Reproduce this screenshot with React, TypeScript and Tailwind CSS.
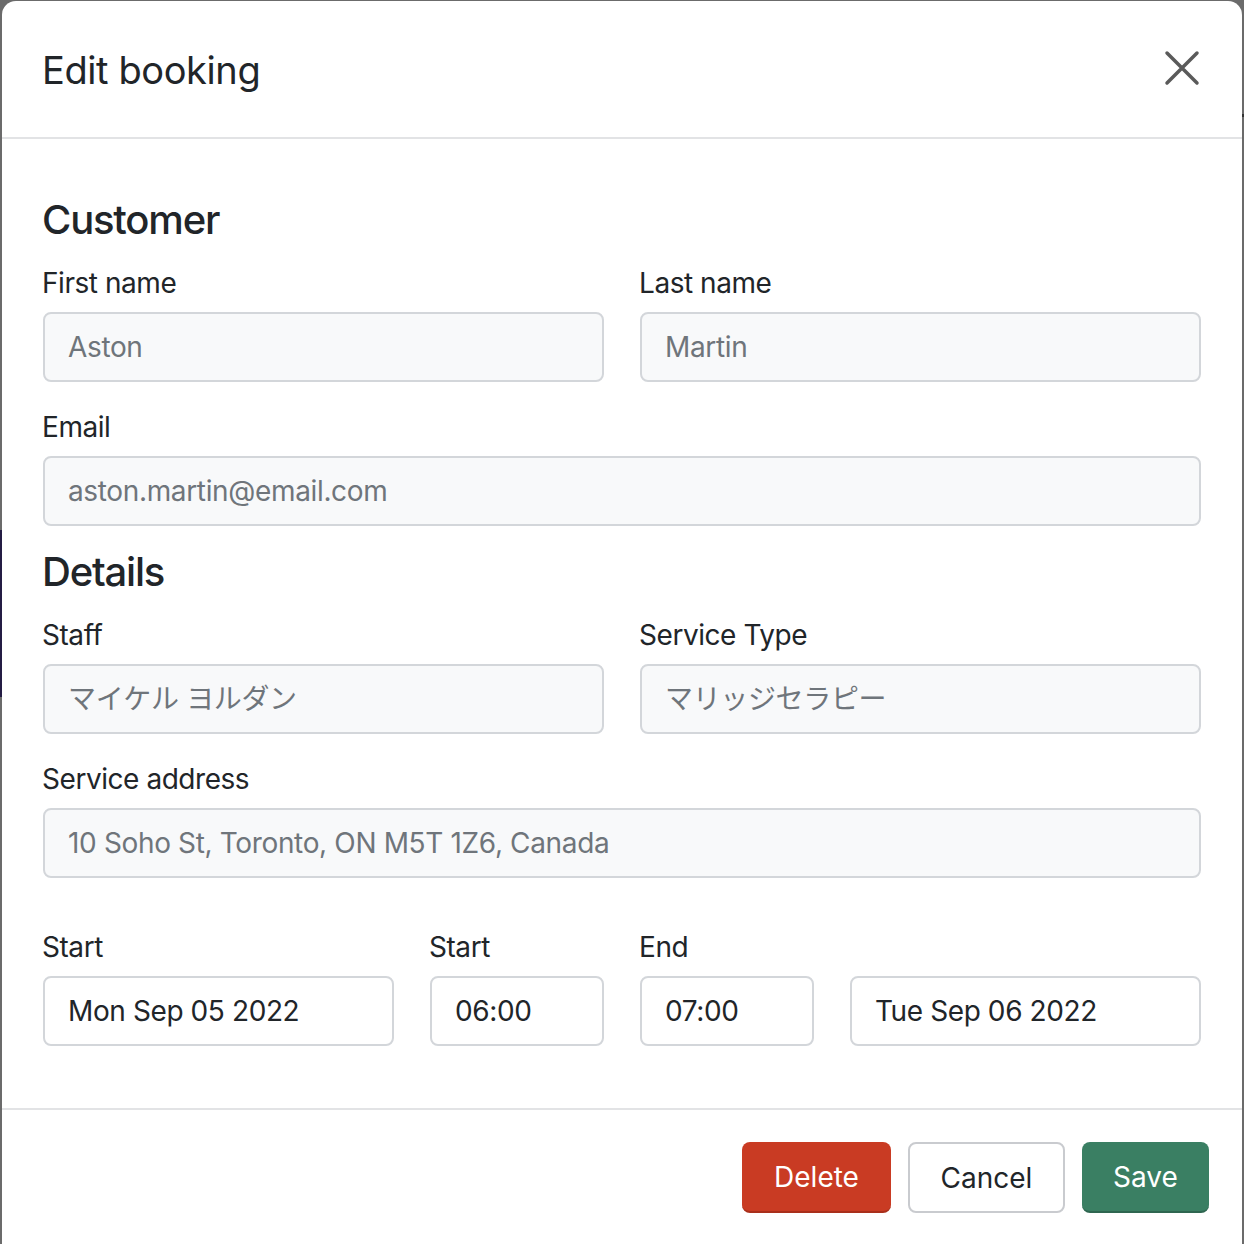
import React from "react";

const font = { fontFamily: 'Inter, "Noto Sans CJK JP", sans-serif' };

function Label({ children }: { children: React.ReactNode }) {
  return <div className="text-[28px] tracking-[-0.45px] leading-[36px] text-[#212529] mb-[11px] -ml-[1px]">{children}</div>;
}

function DisabledInput({ value }: { value: string }) {
  return (
    <div className="h-[70px] rounded-[8px] border-2 border-[#d3d6da] bg-[#f8f9fa] flex items-center pl-[23px] text-[28px] tracking-[-0.35px] text-[#6f757b] whitespace-nowrap overflow-hidden">
      {value}
    </div>
  );
}

function WhiteInput({ value }: { value: string }) {
  return (
    <div className="h-[70px] rounded-[8px] border-2 border-[#d3d6da] bg-white flex items-center pl-[23px] text-[28px] tracking-[-0.4px] text-[#212529] whitespace-nowrap overflow-hidden">
      {value}
    </div>
  );
}

export default function App() {
  return (
    <div className="relative w-[1244px] h-[1244px] bg-[#6b6b6b] overflow-hidden" style={font}>
      <div className="absolute left-0 top-[530px] w-[2px] h-[167px] bg-[#241c44]" />
      <div className="absolute right-0 top-[114px] w-[2px] h-[3px] bg-[#333]" />
      <div className="ml-[2px] mt-[1px] w-[1240px] h-[1280px] bg-white rounded-[14px] flex flex-col">
        {/* Header */}
        <div className="h-[138px] border-b-2 border-[#e2e3e5] flex items-center justify-between pl-[40px] pr-[42px]">
          <div className="text-[38px] tracking-[-0.4px] leading-[48px] text-[#212529] mt-[2px]">Edit booking</div>
          <svg width="36" height="36" viewBox="0 0 36 36" className="mb-[2px]">
            <path d="M3 3 L33 33 M33 3 L3 33" stroke="#5a5a5a" strokeWidth="3.5" strokeLinecap="round" />
          </svg>
        </div>

        {/* Body */}
        <div className="pl-[41px] pr-[41px] pt-[56px]">
          <div className="text-[40px] tracking-[-1.2px] leading-[50px] font-medium text-[#212529] mb-[20px] -ml-[1px]">Customer</div>
          <div className="grid grid-cols-2 gap-x-[36px]">
            <div>
              <Label>First name</Label>
              <DisabledInput value="Aston" />
            </div>
            <div>
              <Label>Last name</Label>
              <DisabledInput value="Martin" />
            </div>
          </div>
          <div className="mt-[27px]">
            <Label>Email</Label>
            <DisabledInput value="aston.martin@email.com" />
          </div>

          <div className="text-[40px] tracking-[-1.2px] leading-[50px] font-medium text-[#212529] mt-[21px] mb-[20px] -ml-[1px]">Details</div>
          <div className="grid grid-cols-2 gap-x-[36px]">
            <div>
              <Label>Staff</Label>
              <DisabledInput value="マイケル ヨルダン" />
            </div>
            <div>
              <Label>Service Type</Label>
              <DisabledInput value="マリッジセラピー" />
            </div>
          </div>
          <div className="mt-[27px]">
            <Label>Service address</Label>
            <DisabledInput value="10 Soho St, Toronto, ON M5T 1Z6, Canada" />
          </div>

          <div className="grid grid-cols-[351px_174px_174px_351px] gap-x-[36px] mt-[51px]">
            <div>
              <Label>Start</Label>
              <WhiteInput value="Mon Sep 05 2022" />
            </div>
            <div>
              <Label>Start</Label>
              <WhiteInput value="06:00" />
            </div>
            <div>
              <Label>End</Label>
              <WhiteInput value="07:00" />
            </div>
            <div>
              <Label>&nbsp;</Label>
              <WhiteInput value="Tue Sep 06 2022" />
            </div>
          </div>
        </div>

        {/* Footer */}
        <div className="mt-[62px] border-t-2 border-[#e2e3e5] pt-[32px] pr-[33px] flex justify-end gap-[17px]">
          <button className="w-[149px] h-[71px] rounded-[8px] bg-[#c93b23] border-b-2 border-[#a92f1b] text-white text-[28px] flex items-center justify-center">
            Delete
          </button>
          <button className="w-[157px] h-[71px] rounded-[8px] bg-white border-2 border-[#c9cbcf] text-[#212529] text-[28px] flex items-center justify-center">
            Cancel
          </button>
          <button className="w-[127px] h-[71px] rounded-[8px] bg-[#3a7f63] border-b-2 border-[#2e6650] text-white text-[28px] flex items-center justify-center">
            Save
          </button>
        </div>
      </div>
    </div>
  );
}
